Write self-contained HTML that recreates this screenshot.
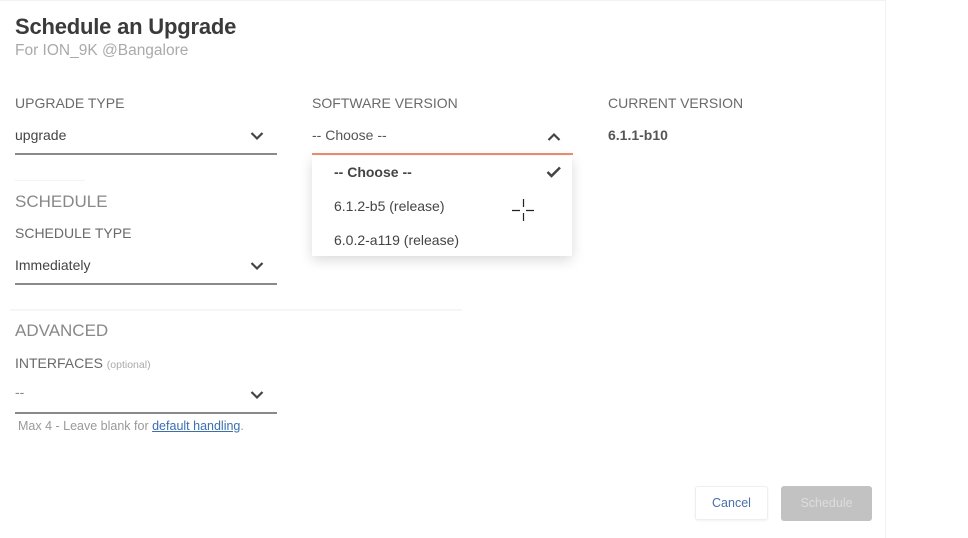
<!DOCTYPE html>
<html><head><meta charset="utf-8"><style>
*{margin:0;padding:0;box-sizing:border-box}
body{width:968px;height:538px;background:#fff;font-family:"Liberation Sans",sans-serif;position:relative;overflow:hidden;color:#333}
.a{position:absolute;white-space:nowrap}
.lbl{font-size:14px;color:#6a6a6a}
.val{font-size:14px;color:#444}
.ul{position:absolute;height:2px;background:#8a8a8a}
.chev{position:absolute}
.sec{font-size:17px;color:#888}
</style></head><body>
<div class="a" style="left:0;top:0;width:886px;height:538px;border-right:1px solid #f2f2f2;border-top:1px solid #f2f2f2"></div>
<div class="a" style="left:15px;top:14px;font-size:22px;font-weight:bold;color:#3a3a3a;letter-spacing:-0.2px">Schedule an Upgrade</div>
<div class="a" style="left:15px;top:42px;font-size:15.5px;color:#aaa">For ION_9K @Bangalore</div>

<div class="a lbl" style="left:15px;top:95px">UPGRADE TYPE</div>
<div class="a val" style="left:15px;top:127px">upgrade</div>
<svg class="chev" style="left:250px;top:131px" width="14" height="10"><path d="M1.5 2 L7 7.5 L12.5 2" fill="none" stroke="#444" stroke-width="2.2"/></svg>
<div class="ul" style="left:15px;top:153px;width:262px"></div>

<div class="a lbl" style="left:312px;top:95px">SOFTWARE VERSION</div>
<div class="a val" style="left:312px;top:127px;color:#555">-- Choose --</div>
<svg class="chev" style="left:547px;top:132px" width="14" height="10"><path d="M1.5 8 L7 2.5 L12.5 8" fill="none" stroke="#444" stroke-width="2.2"/></svg>
<div class="ul" style="left:312px;top:153px;width:261px;background:#ec8f70"></div>

<div class="a lbl" style="left:608px;top:95px">CURRENT VERSION</div>
<div class="a val" style="left:608px;top:127px;font-weight:bold;color:#555">6.1.1-b10</div>

<div class="a" style="left:15px;top:180px;width:70px;height:1px;background:#f3f3f3"></div>
<div class="a sec" style="left:15px;top:192px">SCHEDULE</div>
<div class="a lbl" style="left:15px;top:225px">SCHEDULE TYPE</div>
<div class="a val" style="left:15px;top:257px">Immediately</div>
<svg class="chev" style="left:250px;top:261px" width="14" height="10"><path d="M1.5 2 L7 7.5 L12.5 2" fill="none" stroke="#444" stroke-width="2.2"/></svg>
<div class="ul" style="left:15px;top:283px;width:262px"></div>

<div class="a" style="left:10px;top:309px;width:452px;height:2px;background:#f6f6f6"></div>
<div class="a sec" style="left:15px;top:321px">ADVANCED</div>
<div class="a lbl" style="left:15px;top:355px">INTERFACES <span style="font-size:10.5px;color:#aaa">(optional)</span></div>
<div class="a val" style="left:15px;top:384px;color:#888">--</div>
<svg class="chev" style="left:250px;top:390px" width="14" height="10"><path d="M1.5 2 L7 7.5 L12.5 2" fill="none" stroke="#444" stroke-width="2.2"/></svg>
<div class="ul" style="left:15px;top:412px;width:262px"></div>
<div class="a" style="left:18px;top:419px;font-size:12.5px;color:#999">Max 4 - Leave blank for <span style="color:#3a6fb0;text-decoration:underline">default handling</span>.</div>

<div class="a" style="left:312px;top:156px;width:260px;height:100px;background:#fff;box-shadow:0 4px 12px rgba(0,0,0,0.15)"></div>
<div class="a val" style="left:334px;top:164px;font-weight:bold;color:#444">-- Choose --</div>
<svg class="chev" style="left:546px;top:166px" width="16" height="12"><path d="M1.5 6 L5.5 10 L14 1.5" fill="none" stroke="#444" stroke-width="2.5"/></svg>
<div class="a val" style="left:334px;top:198px">6.1.2-b5 (release)</div>
<div class="a val" style="left:334px;top:232px">6.0.2-a119 (release)</div>
<svg class="a" style="left:511px;top:198px" width="26" height="26"><path d="M1 12.5H9M15 12.5H23M12.5 1V9M12.5 15V23" stroke="#222" stroke-width="1.2"/></svg>

<div class="a" style="left:695px;top:486px;width:73px;height:34px;border:1px solid #eee;border-radius:3px;background:#fff;box-shadow:0 1px 2px rgba(0,0,0,0.06);font-size:12.5px;color:#4a6fa8;text-align:center;line-height:32px">Cancel</div>
<div class="a" style="left:781px;top:486px;width:91px;height:35px;border-radius:3px;background:#c2c2c2;font-size:12.5px;color:#ddd;text-align:center;line-height:35px">Schedule</div>
</body></html>
